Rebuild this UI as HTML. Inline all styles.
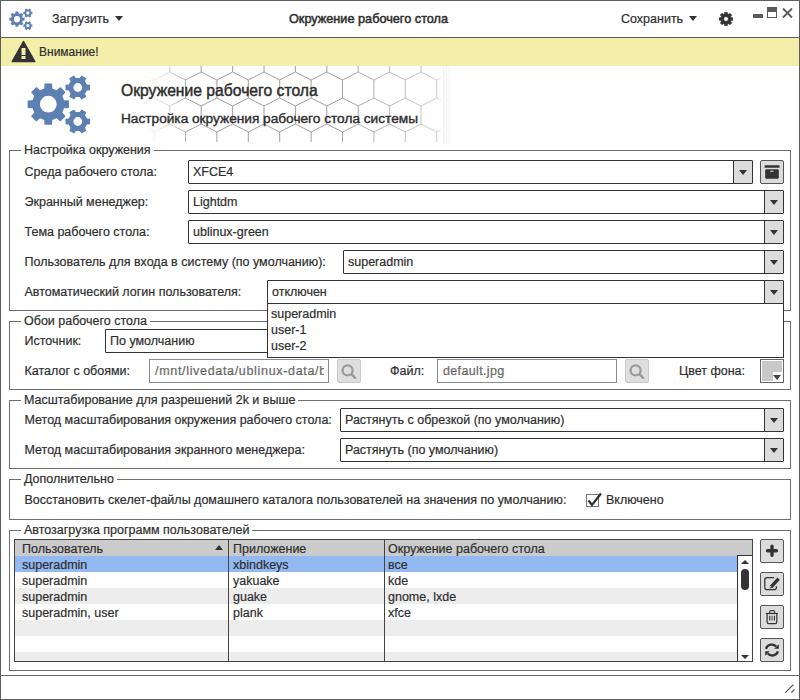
<!DOCTYPE html>
<html><head><meta charset="utf-8"><style>
*{box-sizing:border-box}
html,body{margin:0;padding:0}
body{width:800px;height:700px;overflow:hidden;background:#fff;font-family:"Liberation Sans",sans-serif;font-size:12.5px;color:#2e2e2e;position:relative;-webkit-text-stroke:0.2px #2e2e2e}
.a{position:absolute}
.t{position:absolute;white-space:nowrap;line-height:15px;margin-top:1px}
.fr{position:absolute;border:1px solid #6e6e6e}
.fl{position:absolute;background:#fff;padding:0 3px;white-space:nowrap;line-height:15px;margin-top:1px}
.cb{position:absolute;border:1px solid #333;border-radius:1px;background:#fff;height:24px}
.cb .b{position:absolute;right:0;top:0;bottom:0;width:19px;border-left:1px solid #333;background:#dcdcdc;border-radius:0 1px 1px 0}
.cb .v{position:absolute;left:4px;top:4px;white-space:nowrap;line-height:15px}
.tri{position:absolute;width:0;height:0;border-left:4.5px solid transparent;border-right:4.5px solid transparent;border-top:5px solid #333}
.cb .tri{left:5px;top:9px}
.btn{position:absolute;width:24px;height:24px;border:1px solid #555;border-radius:2px;background:#dcdcdc}
.dis{border-color:#c9c9c9;background:#dedede}
.en{position:absolute;border:1px solid #8a8a9a;background:#fff;height:24px;overflow:hidden}
.en .v{position:absolute;left:5px;top:4px;white-space:nowrap;line-height:15px;color:#7a7a7a}
.row{position:absolute;left:1px;width:722px;height:16px}
</style></head><body>
<!-- window border -->
<div class="a" style="left:0;top:0;width:800px;height:700px;border:1px solid #5e5e5e"></div>

<!-- header -->
<svg class="a" style="left:9px;top:8px" width="26" height="23" viewBox="0 0 70 62"><path fill="#5b80b1" fill-rule="evenodd" d="M17.25,14.41L17.53,9.54L25.07,9.54L25.35,14.41L29.60,16.17L33.24,12.92L38.58,18.26L35.33,21.90L37.09,26.15L41.96,26.43L41.96,33.97L37.09,34.25L35.33,38.50L38.58,42.14L33.24,47.48L29.60,44.23L25.35,45.99L25.07,50.86L17.53,50.86L17.25,45.99L13.00,44.23L9.36,47.48L4.02,42.14L7.27,38.50L5.51,34.25L0.64,33.97L0.64,26.43L5.51,26.15L7.27,21.90L4.02,18.26L9.36,12.92L13.00,16.17ZM12.90,30.20a8.4,8.4 0 1 0 16.8,0a8.4,8.4 0 1 0 -16.8,0ZM52.70,4.09L54.57,1.48L59.33,4.23L58.00,7.15L59.90,10.44L63.10,10.75L63.10,16.25L59.90,16.56L58.00,19.85L59.33,22.77L54.57,25.52L52.70,22.91L48.90,22.91L47.03,25.52L42.27,22.77L43.60,19.85L41.70,16.56L38.50,16.25L38.50,10.75L41.70,10.44L43.60,7.15L42.27,4.23L47.03,1.48L48.90,4.09ZM46.40,13.50a4.4,4.4 0 1 0 8.8,0a4.4,4.4 0 1 0 -8.8,0ZM52.70,38.09L54.57,35.48L59.33,38.23L58.00,41.15L59.90,44.44L63.10,44.75L63.10,50.25L59.90,50.56L58.00,53.85L59.33,56.77L54.57,59.52L52.70,56.91L48.90,56.91L47.03,59.52L42.27,56.77L43.60,53.85L41.70,50.56L38.50,50.25L38.50,44.75L41.70,44.44L43.60,41.15L42.27,38.23L47.03,35.48L48.90,38.09ZM46.40,47.50a4.4,4.4 0 1 0 8.8,0a4.4,4.4 0 1 0 -8.8,0Z"/></svg>
<div class="t" style="left:52px;top:11px">Загрузить</div>
<div class="tri" style="left:115px;top:16px"></div>
<div class="t" style="left:289px;top:11px;font-size:12.7px;-webkit-text-stroke:0.5px #2e2e2e">Окружение рабочего стола</div>
<div class="t" style="left:621px;top:11px">Сохранить</div>
<div class="tri" style="left:689px;top:16px"></div>
<svg class="a" style="left:719px;top:12px" width="14" height="14" viewBox="0 0 14 14"><path fill="#333" fill-rule="evenodd" stroke="#333" stroke-width="0.5" stroke-linejoin="round" d="M5.39,2.05L5.63,0.13L8.37,0.13L8.61,2.05L9.36,2.37L10.89,1.18L12.82,3.11L11.63,4.64L11.95,5.39L13.87,5.63L13.87,8.37L11.95,8.61L11.63,9.36L12.82,10.89L10.89,12.82L9.36,11.63L8.61,11.95L8.37,13.87L5.63,13.87L5.39,11.95L4.64,11.63L3.11,12.82L1.18,10.89L2.37,9.36L2.05,8.61L0.13,8.37L0.13,5.63L2.05,5.39L2.37,4.64L1.18,3.11L3.11,1.18L4.64,2.37ZM4.70,7.00a2.3,2.3 0 1 0 4.6,0a2.3,2.3 0 1 0 -4.6,0Z"/></svg>
<div class="a" style="left:753px;top:14px;width:10px;height:4px;background:#5a5a5a"></div>
<div class="a" style="left:767px;top:7px;width:10px;height:11px;border:1px solid #5a5a5a;border-top:5px solid #5a5a5a"></div>
<svg class="a" style="left:782px;top:8px" width="11" height="10" viewBox="0 0 11 10"><path d="M1,0.5L10,9.5M10,0.5L1,9.5" stroke="#5a5a5a" stroke-width="1.9"/></svg>
<div class="a" style="left:0;top:37px;width:800px;height:1px;background:#5e5e5e"></div>

<!-- warning bar -->
<div class="a" style="left:1px;top:38px;width:798px;height:28px;background:#f4eeab"></div>
<svg class="a" style="left:11px;top:40px" width="25" height="23" viewBox="0 0 25 23"><path d="M12.5,1.5L23.8,21.5L1.2,21.5Z" fill="#333" stroke="#333" stroke-width="1.5" stroke-linejoin="round"/><rect x="10.5" y="8" width="4" height="7" fill="#f4eeab"/><rect x="10.5" y="16" width="4" height="3" fill="#f4eeab"/></svg>
<div class="t" style="left:39px;top:44px;font-size:12px">Внимание!</div>

<!-- banner -->
<svg class="a" style="left:140px;top:66px" width="340" height="76" viewBox="140 66 340 76"><defs><linearGradient id="hg" x1="140" x2="480" y1="0" y2="0" gradientUnits="userSpaceOnUse"><stop offset="0" stop-color="#fff" stop-opacity="0"/><stop offset="0.044" stop-color="#fff" stop-opacity="0.15"/><stop offset="0.16" stop-color="#fff" stop-opacity="0.9"/><stop offset="0.56" stop-color="#fff" stop-opacity="0.9"/><stop offset="0.876" stop-color="#fff" stop-opacity="0.45"/><stop offset="0.89" stop-color="#fff" stop-opacity="0"/></linearGradient><mask id="hm"><rect x="140" y="66" width="340" height="76" fill="url(#hg)"/></mask></defs><path mask="url(#hm)" d="M75.6,54V72M75.6,72L91.3,80M75.6,72L59.9,80M107.0,54V72M107.0,72L122.7,80M107.0,72L91.3,80M138.4,54V72M138.4,72L154.1,80M138.4,72L122.7,80M169.8,54V72M169.8,72L185.5,80M169.8,72L154.1,80M201.2,54V72M201.2,72L216.9,80M201.2,72L185.5,80M232.6,54V72M232.6,72L248.3,80M232.6,72L216.9,80M264.0,54V72M264.0,72L279.7,80M264.0,72L248.3,80M295.4,54V72M295.4,72L311.1,80M295.4,72L279.7,80M326.8,54V72M326.8,72L342.5,80M326.8,72L311.1,80M358.2,54V72M358.2,72L373.9,80M358.2,72L342.5,80M389.6,54V72M389.6,72L405.3,80M389.6,72L373.9,80M421.0,54V72M421.0,72L436.7,80M421.0,72L405.3,80M452.4,54V72M452.4,72L468.1,80M452.4,72L436.7,80M483.8,54V72M483.8,72L499.5,80M483.8,72L468.1,80M515.2,54V72M515.2,72L530.9,80M515.2,72L499.5,80M546.6,54V72M546.6,72L562.3,80M546.6,72L530.9,80M91.3,80V98M91.3,98L107.0,106M91.3,98L75.6,106M122.7,80V98M122.7,98L138.4,106M122.7,98L107.0,106M154.1,80V98M154.1,98L169.8,106M154.1,98L138.4,106M185.5,80V98M185.5,98L201.2,106M185.5,98L169.8,106M216.9,80V98M216.9,98L232.6,106M216.9,98L201.2,106M248.3,80V98M248.3,98L264.0,106M248.3,98L232.6,106M279.7,80V98M279.7,98L295.4,106M279.7,98L264.0,106M311.1,80V98M311.1,98L326.8,106M311.1,98L295.4,106M342.5,80V98M342.5,98L358.2,106M342.5,98L326.8,106M373.9,80V98M373.9,98L389.6,106M373.9,98L358.2,106M405.3,80V98M405.3,98L421.0,106M405.3,98L389.6,106M436.7,80V98M436.7,98L452.4,106M436.7,98L421.0,106M468.1,80V98M468.1,98L483.8,106M468.1,98L452.4,106M499.5,80V98M499.5,98L515.2,106M499.5,98L483.8,106M530.9,80V98M530.9,98L546.6,106M530.9,98L515.2,106M562.3,80V98M562.3,98L578.0,106M562.3,98L546.6,106M75.6,106V124M75.6,124L91.3,132M75.6,124L59.9,132M107.0,106V124M107.0,124L122.7,132M107.0,124L91.3,132M138.4,106V124M138.4,124L154.1,132M138.4,124L122.7,132M169.8,106V124M169.8,124L185.5,132M169.8,124L154.1,132M201.2,106V124M201.2,124L216.9,132M201.2,124L185.5,132M232.6,106V124M232.6,124L248.3,132M232.6,124L216.9,132M264.0,106V124M264.0,124L279.7,132M264.0,124L248.3,132M295.4,106V124M295.4,124L311.1,132M295.4,124L279.7,132M326.8,106V124M326.8,124L342.5,132M326.8,124L311.1,132M358.2,106V124M358.2,124L373.9,132M358.2,124L342.5,132M389.6,106V124M389.6,124L405.3,132M389.6,124L373.9,132M421.0,106V124M421.0,124L436.7,132M421.0,124L405.3,132M452.4,106V124M452.4,124L468.1,132M452.4,124L436.7,132M483.8,106V124M483.8,124L499.5,132M483.8,124L468.1,132M515.2,106V124M515.2,124L530.9,132M515.2,124L499.5,132M546.6,106V124M546.6,124L562.3,132M546.6,124L530.9,132M91.3,132V150M91.3,150L107.0,158M91.3,150L75.6,158M122.7,132V150M122.7,150L138.4,158M122.7,150L107.0,158M154.1,132V150M154.1,150L169.8,158M154.1,150L138.4,158M185.5,132V150M185.5,150L201.2,158M185.5,150L169.8,158M216.9,132V150M216.9,150L232.6,158M216.9,150L201.2,158M248.3,132V150M248.3,150L264.0,158M248.3,150L232.6,158M279.7,132V150M279.7,150L295.4,158M279.7,150L264.0,158M311.1,132V150M311.1,150L326.8,158M311.1,150L295.4,158M342.5,132V150M342.5,150L358.2,158M342.5,150L326.8,158M373.9,132V150M373.9,150L389.6,158M373.9,150L358.2,158M405.3,132V150M405.3,150L421.0,158M405.3,150L389.6,158M436.7,132V150M436.7,150L452.4,158M436.7,150L421.0,158M468.1,132V150M468.1,150L483.8,158M468.1,150L452.4,158M499.5,132V150M499.5,150L515.2,158M499.5,150L483.8,158M530.9,132V150M530.9,150L546.6,158M530.9,150L515.2,158M562.3,132V150M562.3,150L578.0,158M562.3,150L546.6,158" stroke="#7a7a7a" stroke-width="0.8" fill="none"/></svg>
<div class="a" id="hexstrip" style="left:443px;top:66px;width:9px;height:78px;background:linear-gradient(90deg,#f2f2f2 0,#f2f2f2 1px,#fafafa 1px,#fafafa 3px,#f4f4f4 3px,#f4f4f4 4px,#fbfbfb 4px,#fbfbfb 6px,#f6f6f6 6px,#f6f6f6 7px,#fff 7px)"></div>
<svg class="a" style="left:27px;top:74px" width="70" height="62" viewBox="0 0 70 62"><path fill="#5b80b1" fill-rule="evenodd" d="M17.25,14.41L17.53,9.54L25.07,9.54L25.35,14.41L29.60,16.17L33.24,12.92L38.58,18.26L35.33,21.90L37.09,26.15L41.96,26.43L41.96,33.97L37.09,34.25L35.33,38.50L38.58,42.14L33.24,47.48L29.60,44.23L25.35,45.99L25.07,50.86L17.53,50.86L17.25,45.99L13.00,44.23L9.36,47.48L4.02,42.14L7.27,38.50L5.51,34.25L0.64,33.97L0.64,26.43L5.51,26.15L7.27,21.90L4.02,18.26L9.36,12.92L13.00,16.17ZM12.90,30.20a8.4,8.4 0 1 0 16.8,0a8.4,8.4 0 1 0 -16.8,0ZM52.70,4.09L54.57,1.48L59.33,4.23L58.00,7.15L59.90,10.44L63.10,10.75L63.10,16.25L59.90,16.56L58.00,19.85L59.33,22.77L54.57,25.52L52.70,22.91L48.90,22.91L47.03,25.52L42.27,22.77L43.60,19.85L41.70,16.56L38.50,16.25L38.50,10.75L41.70,10.44L43.60,7.15L42.27,4.23L47.03,1.48L48.90,4.09ZM46.40,13.50a4.4,4.4 0 1 0 8.8,0a4.4,4.4 0 1 0 -8.8,0ZM52.70,38.09L54.57,35.48L59.33,38.23L58.00,41.15L59.90,44.44L63.10,44.75L63.10,50.25L59.90,50.56L58.00,53.85L59.33,56.77L54.57,59.52L52.70,56.91L48.90,56.91L47.03,59.52L42.27,56.77L43.60,53.85L41.70,50.56L38.50,50.25L38.50,44.75L41.70,44.44L43.60,41.15L42.27,38.23L47.03,35.48L48.90,38.09ZM46.40,47.50a4.4,4.4 0 1 0 8.8,0a4.4,4.4 0 1 0 -8.8,0Z"/></svg>
<div class="t" style="left:121px;top:81px;font-size:15.7px;line-height:18px;-webkit-text-stroke:0.45px #2e2e2e">Окружение рабочего стола</div>
<div class="t" style="left:121px;top:110px;font-size:13.66px;line-height:16px;-webkit-text-stroke:0.4px #2e2e2e">Настройка окружения рабочего стола системы</div>

<!-- frame 1 -->
<div class="fr" style="left:9px;top:150px;width:782px;height:161px"></div>
<div class="fl" style="left:21px;top:142px">Настройка окружения</div>
<div class="t" style="left:24.5px;top:164px">Среда рабочего стола:</div>
<div class="cb" style="left:188px;top:160px;width:565px"><div class="v">XFCE4</div><div class="b"><div class="tri"></div></div></div>
<div class="btn" style="left:760px;top:160px"><svg class="a" style="left:3px;top:3px" width="16" height="16" viewBox="0 0 16 16"><rect x="0.6" y="1.2" width="15" height="2.6" fill="#333" rx="0.6"/><rect x="1.2" y="5.2" width="13.6" height="9.6" fill="#333" rx="1"/><rect x="6.1" y="6.7" width="3.6" height="1.1" rx="0.5" fill="#e6e6e6"/></svg></div>
<div class="t" style="left:24.5px;top:194px">Экранный менеджер:</div>
<div class="cb" style="left:188px;top:190px;width:596px"><div class="v">Lightdm</div><div class="b"><div class="tri"></div></div></div>
<div class="t" style="left:24.5px;top:224px">Тема рабочего стола:</div>
<div class="cb" style="left:188px;top:220px;width:596px"><div class="v">ublinux-green</div><div class="b"><div class="tri"></div></div></div>
<div class="t" style="left:24.5px;top:254px">Пользователь для входа в систему (по умолчанию):</div>
<div class="cb" style="left:343px;top:250px;width:441px"><div class="v">superadmin</div><div class="b"><div class="tri"></div></div></div>
<div class="t" style="left:24.5px;top:284px">Автоматический логин пользователя:</div>

<!-- frame 2 -->
<div class="fr" style="left:9px;top:321px;width:782px;height:69px"></div>
<div class="fl" style="left:21px;top:313px">Обои рабочего стола</div>
<div class="t" style="left:24.5px;top:333px">Источник:</div>
<div class="cb" style="left:105px;top:329px;width:679px"><div class="v">По умолчанию</div><div class="b"><div class="tri"></div></div></div>
<div class="t" style="left:24.5px;top:363px">Каталог с обоями:</div>
<div class="en" style="left:149px;top:359px;width:180px"><div class="a" style="left:1px;top:0;width:173px;height:22px;overflow:hidden"><div class="v" style="left:4px;letter-spacing:0.68px">/mnt/livedata/ublinux-data/bg</div></div></div>
<div class="btn dis" style="left:337px;top:359px"><svg class="a" style="left:3px;top:3px" width="16" height="16" viewBox="0 0 16 16"><circle cx="6.6" cy="7.4" r="5" fill="none" stroke="#9a9a9a" stroke-width="2.3"/><path d="M10.4,11.2L14.2,15" stroke="#9a9a9a" stroke-width="2.4" stroke-linecap="round"/></svg></div>
<div class="t" style="left:390px;top:363px">Файл:</div>
<div class="en" style="left:437px;top:359px;width:180px"><div class="v" style="letter-spacing:0.35px">default.jpg</div></div>
<div class="btn dis" style="left:625px;top:359px"><svg class="a" style="left:3px;top:3px" width="16" height="16" viewBox="0 0 16 16"><circle cx="6.6" cy="7.4" r="5" fill="none" stroke="#9a9a9a" stroke-width="2.3"/><path d="M10.4,11.2L14.2,15" stroke="#9a9a9a" stroke-width="2.4" stroke-linecap="round"/></svg></div>
<div class="t" style="left:679px;top:363px">Цвет фона:</div>
<div class="a" style="left:760px;top:359px;width:24px;height:24px;border:1px solid #666;background:#fff"><div class="a" style="left:1px;top:1px;width:20px;height:20px;background:#c8c8c8"></div><div class="a" style="left:12px;top:12px;width:10px;height:10px;background:#fff"></div><div class="tri" style="left:12px;top:15px;border-top-color:#444"></div></div>

<!-- frame 3 -->
<div class="fr" style="left:9px;top:400px;width:782px;height:69px"></div>
<div class="fl" style="left:21px;top:392px">Масштабирование для разрешений 2k и выше</div>
<div class="t" style="left:24.5px;top:412px">Метод масштабирования окружения рабочего стола:</div>
<div class="cb" style="left:340px;top:408px;width:444px"><div class="v">Растянуть с обрезкой (по умолчанию)</div><div class="b"><div class="tri"></div></div></div>
<div class="t" style="left:24.5px;top:442px">Метод масштабирования экранного менеджера:</div>
<div class="cb" style="left:340px;top:438px;width:444px"><div class="v">Растянуть (по умолчанию)</div><div class="b"><div class="tri"></div></div></div>

<!-- frame 4 -->
<div class="fr" style="left:9px;top:479px;width:782px;height:41px"></div>
<div class="fl" style="left:21px;top:471px">Дополнительно</div>
<div class="t" style="left:24.5px;top:492px">Восстановить скелет-файлы домашнего каталога пользователей на значения по умолчанию:</div>
<div class="a" style="left:586px;top:494px;width:13px;height:13px;border:1px solid #777;background:#fff"></div>
<svg class="a" style="left:586px;top:492px" width="17" height="16" viewBox="0 0 17 16"><path d="M2.5,8.5L6,13L15,1.5" fill="none" stroke="#333" stroke-width="2.2"/></svg>
<div class="t" style="left:606px;top:492px">Включено</div>

<!-- frame 5 -->
<div class="fr" style="left:9px;top:530px;width:782px;height:141px"></div>
<div class="fl" style="left:21px;top:522px">Автозагрузка программ пользователей</div>
<div class="a" style="left:14px;top:539px;width:739px;height:123px;border:1px solid #444;background:#fff;overflow:hidden">
  <div class="a" style="left:0;top:0;width:737px;height:16px;background:#cbcbcb"></div>
  <div class="row" style="left:0;top:16px;background:#92b9f1"></div>
  <div class="row" style="left:0;top:48px;background:#ededed"></div>
  <div class="row" style="left:0;top:80px;background:#ededed"></div>
  <div class="row" style="left:0;top:112px;background:#ededed"></div>
  <div class="a" style="left:213px;top:0;width:1px;height:121px;background:#444"></div>
  <div class="a" style="left:369px;top:0;width:1px;height:121px;background:#444"></div>
  <div class="t" style="left:7px;top:1px">Пользователь</div>
  <div class="tri" style="left:200px;top:5px;border-top:0;border-bottom:5px solid #333"></div>
  <div class="t" style="left:218px;top:1px">Приложение</div>
  <div class="t" style="left:373px;top:1px">Окружение рабочего стола</div>
  <div class="t" style="left:7px;top:17px">superadmin</div>
  <div class="t" style="left:218px;top:17px">xbindkeys</div>
  <div class="t" style="left:373px;top:17px">все</div>
  <div class="t" style="left:7px;top:33px">superadmin</div>
  <div class="t" style="left:218px;top:33px">yakuake</div>
  <div class="t" style="left:373px;top:33px">kde</div>
  <div class="t" style="left:7px;top:49px">superadmin</div>
  <div class="t" style="left:218px;top:49px">guake</div>
  <div class="t" style="left:373px;top:49px">gnome, lxde</div>
  <div class="t" style="left:7px;top:65px">superadmin, user</div>
  <div class="t" style="left:218px;top:65px">plank</div>
  <div class="t" style="left:373px;top:65px">xfce</div>
  <!-- scrollbar -->
  <div class="a" style="left:722px;top:15px;width:16px;height:107px;border:1px solid #333;border-bottom:0;border-right:0;background:#fff">
    <div class="tri" style="left:3px;top:4px;border-top:0;border-bottom:4px solid #333;border-left-width:4px;border-right-width:4px"></div>
    <div class="a" style="left:3px;top:13px;width:8px;height:21px;border-radius:4px;background:#333"></div>
    <div class="tri" style="left:3px;top:99px;border-top-width:4px;border-left-width:4px;border-right-width:4px"></div>
  </div>
</div>
<div class="btn" style="left:760px;top:539px"><svg class="a" style="left:3px;top:3px" width="16" height="16" viewBox="0 0 16 16"><path d="M8,3.3V12.3M3.5,7.8H12.5" stroke="#333" stroke-width="3.4" stroke-linecap="round"/></svg></div>
<div class="btn" style="left:760px;top:572px"><svg class="a" style="left:3px;top:3px" width="16" height="16" viewBox="0 0 16 16"><path d="M10.2,1.6H3Q0.8,1.6 0.8,3.8V11.4Q0.8,13.6 3,13.6H10.2Q12.4,13.6 12.4,11.4V10.2" fill="none" stroke="#333" stroke-width="1.25"/><path d="M7,11.2L14.6,2.6" stroke="#333" stroke-width="3.4"/><path d="M5.6,12.4L6.2,9.6L8.6,11.8Z" fill="#333"/><circle cx="6.6" cy="10.8" r="0.8" fill="#ccc"/></svg></div>
<div class="btn" style="left:760px;top:605px"><svg class="a" style="left:3px;top:3px" width="16" height="16" viewBox="0 0 16 16"><path d="M5.5,4.5V3.2Q5.5,1.5 7.2,1.5H9Q10.7,1.5 10.7,3.2V4.5" fill="#c4c4c4" stroke="#333" stroke-width="1.1"/><path d="M1.8,4.5H14" stroke="#333" stroke-width="1.2"/><path d="M3.1,4.5V13Q3.1,14.6 4.7,14.6H11.2Q12.8,14.6 12.8,13V4.5" fill="none" stroke="#333" stroke-width="1.2"/><path d="M5.7,6.8V11.6M10.4,6.8V11.6" stroke="#333" stroke-width="1.1"/><path d="M8,6.8V11.6" stroke="#888" stroke-width="1.8"/></svg></div>
<div class="btn" style="left:760px;top:638px"><svg class="a" style="left:3px;top:3px" width="16" height="16" viewBox="0 0 16 16"><path d="M2,6.8A6,6 0 0 1 12.2,4.6" fill="none" stroke="#333" stroke-width="2.3"/><path d="M14.8,2.2V6.8H10.2Z" fill="#333"/><path d="M14,9.4A6,6 0 0 1 3.8,11.4" fill="none" stroke="#333" stroke-width="2.3"/><path d="M1.2,9.2H5.8L1.2,13.8Z" fill="#333"/></svg></div>

<!-- popup (combo 5 active) -->
<div class="cb" style="left:267px;top:280px;width:517px"><div class="v">отключен</div><div class="b"><div class="tri"></div></div></div>
<div class="a" style="left:267px;top:303px;width:517px;height:55px;border:1px solid #333;border-top:1px solid #333;background:#fff">
  <div class="t" style="left:3px;top:2px">superadmin</div>
  <div class="t" style="left:3px;top:18px">user-1</div>
  <div class="t" style="left:3px;top:34px">user-2</div>
</div>

<!-- status bar -->
<div class="a" style="left:0;top:675px;width:800px;height:1px;background:#666"></div>
<svg class="a" style="left:784px;top:684px" width="12" height="11" viewBox="0 0 12 11"><path d="M1.4,8.6L9.4,0.6M7.4,8.6L10.6,5.4" stroke="#555" stroke-width="1.3"/></svg>
</body></html>
